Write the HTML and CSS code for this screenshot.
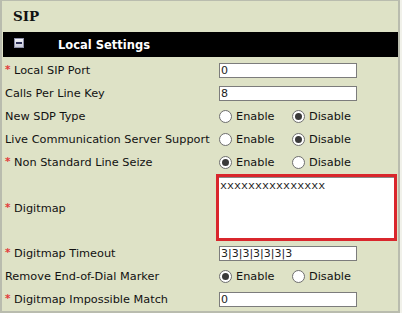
FILE: index.html
```html
<!DOCTYPE html>
<html lang="en">
<head>
  <meta charset="UTF-8"/>
  <title>SIP</title>
  <link rel="stylesheet" href="styles.css">
</head>
<body>
  <div class="panel">
    <h2 class="page-title">SIP</h2>

    <div class="section-bar">
      <span class="toggle"><span class="toggle-line"></span></span>
      <span class="section-title">Local Settings</span>
    </div>

    <table class="settings">
      <tr>
        <td class="label"><span class="req">*</span> Local SIP Port</td>
        <td><input class="field" type="text" value="0"></td>
      </tr>
      <tr>
        <td class="label">Calls Per Line Key</td>
        <td><input class="field" type="text" value="8"></td>
      </tr>
      <tr>
        <td class="label">New SDP Type</td>
        <td>
          <div class="choices">
            <label class="opt"><input type="radio" name="sdp"> Enable</label>
            <label class="opt"><input type="radio" name="sdp" checked> Disable</label>
          </div>
        </td>
      </tr>
      <tr>
        <td class="label">Live Communication Server Support</td>
        <td>
          <div class="choices">
            <label class="opt"><input type="radio" name="lcs"> Enable</label>
            <label class="opt"><input type="radio" name="lcs" checked> Disable</label>
          </div>
        </td>
      </tr>
      <tr>
        <td class="label"><span class="req">*</span> Non Standard Line Seize</td>
        <td>
          <div class="choices">
            <label class="opt"><input type="radio" name="seize" checked> Enable</label>
            <label class="opt"><input type="radio" name="seize"> Disable</label>
          </div>
        </td>
      </tr>
      <tr class="tall">
        <td class="label"><span class="req">*</span> Digitmap</td>
        <td>
          <div class="highlight">
            <textarea class="digitmap">xxxxxxxxxxxxxxx</textarea>
          </div>
        </td>
      </tr>
      <tr>
        <td class="label"><span class="req">*</span> Digitmap Timeout</td>
        <td><input class="field" type="text" value="3|3|3|3|3|3|3"></td>
      </tr>
      <tr>
        <td class="label">Remove End-of-Dial Marker</td>
        <td>
          <div class="choices">
            <label class="opt"><input type="radio" name="eod" checked> Enable</label>
            <label class="opt"><input type="radio" name="eod"> Disable</label>
          </div>
        </td>
      </tr>
      <tr>
        <td class="label"><span class="req">*</span> Digitmap Impossible Match</td>
        <td><input class="field" type="text" value="0"></td>
      </tr>
    </table>
  </div>
</body>
</html>
```

FILE: styles.css
```css
* { box-sizing: border-box; }
html, body { margin: 0; padding: 0; }

body {
  background: #f1f1ea;
  font-family: "DejaVu Sans", Verdana, sans-serif;
  font-size: 11.3px;
  color: #111;
}

.panel {
  width: 400px;
  height: 313px;
  background: #dee2c6;
  border-top: 1px solid #b9bcae;
  border-left: 2px solid #b9bcae;
  border-right: 2px solid #b9bcae;
  border-bottom: 2px solid #b9bcae;
  padding: 0 0 0 1px;
  overflow: hidden;
}

.page-title {
  margin: 0;
  height: 31px;
  padding: 7px 0 0 10px;
  font-family: "DejaVu Serif", "Liberation Serif", serif;
  font-size: 13.5px;
  font-weight: bold;
}

.section-bar {
  height: 25px;
  background: #000;
  color: #fff;
  display: flex;
  align-items: center;
  padding-left: 11px;
}

.toggle {
  width: 10px;
  height: 10px;
  margin-top: -3px;
  background: linear-gradient(#f4f4fa, #c8cad8);
  border: 1px solid #8e90a8;
  display: flex;
  align-items: center;
  justify-content: center;
}

.toggle-line {
  width: 6px;
  height: 2px;
  background: #2a2d55;
}

.section-title {
  margin-left: 34px;
  font-weight: bold;
  font-size: 11.5px;
}

.settings {
  table-layout: fixed;
  border-collapse: separate;
  border-spacing: 0 1px;
  margin-top: 1px;
}

.settings td {
  height: 22px;
  padding: 0;
  vertical-align: middle;
  white-space: nowrap;
}

.settings td.label {
  width: 215px;
  padding-left: 2px;
}

.req {
  color: #e23b3b;
  font-weight: bold;
  font-size: 10.5px;
  vertical-align: 1px;
}

.field {
  display: block;
  width: 138px;
  height: 15px;
  margin: 0 0 0 1px;
  padding: 0 0 0 1px;
  border: 1px solid #7c7c7c;
  background: #fff;
  font-family: "DejaVu Sans", Verdana, sans-serif;
  font-size: 11px;
  color: #222;
  outline: none;
}

.choices {
  display: flex;
  align-items: center;
  height: 22px;
}

.opt {
  display: flex;
  align-items: center;
  width: 73px;
}

.opt input {
  appearance: none;
  flex: none;
  width: 13px;
  height: 13px;
  margin: 0 4px 0 1px;
  border: 1px solid #6e6e6e;
  border-radius: 50%;
  background: #fff;
  display: flex;
  align-items: center;
  justify-content: center;
}

.opt input:checked::after {
  content: "";
  width: 7px;
  height: 7px;
  border-radius: 50%;
  background: #3a3a3a;
}

.tall td {
  height: 67px;
}

.highlight {
  width: 181px;
  height: 67px;
  margin-left: -2px;
  border: 3px solid #d9262c;
  background: #fff;
}

.digitmap {
  display: block;
  width: 100%;
  height: 100%;
  margin: 0;
  padding: 1px 0 0 1px;
  border: none;
  border-top: 1px solid #8a8a8a;
  resize: none;
  font-family: "Liberation Mono", "DejaVu Sans Mono", monospace;
  font-size: 11.7px;
  color: #222;
  outline: none;
}
```
